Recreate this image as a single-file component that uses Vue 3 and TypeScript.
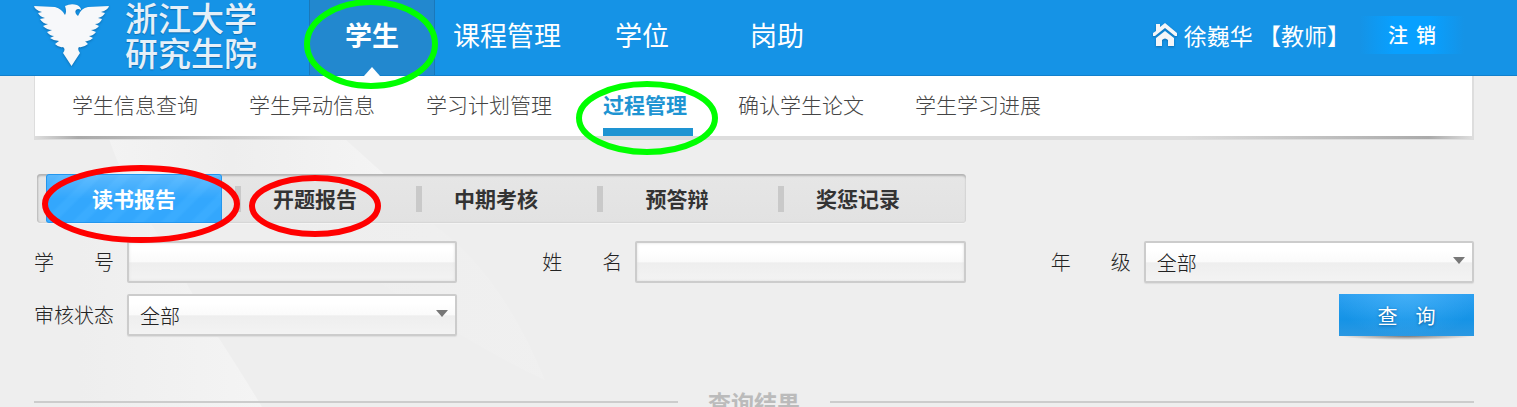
<template>
  <div class="page">
    <svg class="backdrop" viewBox="0 0 700 407" aria-hidden="true">
      <defs>
        <linearGradient id="ray" x1="0" x2="1">
          <stop offset="0" stop-color="#eeeeee" />
          <stop offset=".3" stop-color="#eeeeee" />
          <stop offset="1" stop-color="#f4f4f4" />
        </linearGradient>
        <linearGradient id="rayTop" x1="0" y1="0" x2="1" y2="0">
          <stop offset="0" stop-color="#f3f3f3" />
          <stop offset=".45" stop-color="#eeeeee" />
          <stop offset="1" stop-color="#f4f4f4" />
        </linearGradient>
        <linearGradient id="rayFar" x1="0" y1="0" x2="1" y2="0">
          <stop offset="0" stop-color="#eeeeee" />
          <stop offset="1" stop-color="#f1f1f1" />
        </linearGradient>
      </defs>
      <path d="M106 130 L335 130 L385 175 L385 222 L150 222 Q122 180 106 130 Z" fill="url(#rayTop)" />
      <path d="M0 222 L150 222 Q180 270 207 320 Q240 370 262 407 L60 407 Z" fill="url(#ray)" />
      <path d="M290 222 L430 222 Q500 270 545 380 Q500 360 420 310 Z" fill="url(#rayFar)" opacity=".6" />
    </svg>

    <header class="header">
      <a class="brand" href="#">
        <svg class="eagle" viewBox="0 0 76 64" aria-hidden="true">
          <path
            fill="#f7f8fa"
            d="M0 2 L21 3 Q28 5 31 11 Q33 8 31 2 Q37 -1 43 1 Q47 3 47 6 Q44 4 42 6 Q40 9 44 12 Q47 4 54 3 L75 2 Q74 6 67 8 L71 9 Q69 13 64 14 L68 15 Q66 20 61 20 L65 22 Q62 26 57 26 L62 28 Q59 32 55 32 L59 34 Q55 38 51 37 L54 40 Q49 44 45 43 Q43 45 46 49 Q42 55 37.500 62 Q33 55 29 49 Q32 45 29 43 Q25 44 21 40 L25 37 Q20 37 16 34 L20 32 Q16 32 13 28 L18 26 Q13 26 9 22 L14 20 Q9 20 6 15 L11 14 Q6 13 4 9 L8 8 Q1 6 0 2 Z"
          />
        </svg>
        <span class="brand-text"><span>浙江大学</span><span>研究生院</span></span>
      </a>
      <nav class="main-nav" aria-label="主导航">
        <a v-for="item in mainItems" :key="item" href="#" :class="{ active: item === '学生' }">
          {{ item }}
          <svg v-if="item === '学生'" class="mark mark-main" viewBox="0 0 134 90" aria-hidden="true">
            <ellipse cx="67" cy="44" rx="64" ry="42" />
          </svg>
        </a>
      </nav>
      <div class="user">
        <svg class="home" viewBox="0 0 26 26" aria-hidden="true">
          <path fill="#f4f6f8" d="M4 2 H8 V5 L13 1 L25 11 V14 L23 14 L13 6 L3 14 L1 14 V11 L4 9 Z M4 16 L13 9 L22 16 V24 H16 V18 Q13 15 10 18 V24 H4 Z" />
        </svg>
        <span>徐巍华 【教师】</span>
        <button class="logout" type="button"><span>注</span><span>销</span></button>
      </div>
    </header>

    <main class="content">
      <nav class="sub-nav" aria-label="学生">
        <a v-for="item in subItems" :key="item" href="#" :class="{ active: item === '过程管理' }">
          {{ item }}
          <svg v-if="item === '过程管理'" class="mark mark-sub" viewBox="0 0 144 76" aria-hidden="true">
            <ellipse cx="73" cy="38" rx="68" ry="34" />
          </svg>
        </a>
      </nav>

      <div class="tabs" role="tablist">
        <button
          v-for="(tab, i) in tabs"
          :key="tab"
          type="button"
          role="tab"
          :aria-selected="i === current"
          :class="{ active: i === current }"
          @click="current = i"
        >
          {{ tab }}
          <svg v-if="i === 0" class="mark mark-first" viewBox="0 0 202 80" aria-hidden="true">
            <ellipse cx="101" cy="40" rx="96" ry="36" />
          </svg>
          <svg v-if="i === 1" class="mark mark-second" viewBox="0 0 134 66" aria-hidden="true">
            <ellipse cx="67" cy="32" rx="63" ry="28" />
          </svg>
        </button>
      </div>

      <form class="filters" @submit.prevent>
        <div class="field">
          <label for="sid">学 号</label>
          <input id="sid" v-model="studentId" type="text" />
        </div>
        <div class="field">
          <label for="sname">姓 名</label>
          <input id="sname" v-model="studentName" type="text" />
        </div>
        <div class="field">
          <label for="grade">年 级</label>
          <span class="select-box">
            <select id="grade"><option>全部</option></select>
          </span>
        </div>
        <div class="field">
          <label for="state">审核状态</label>
          <span class="select-box">
            <select id="state"><option>全部</option></select>
          </span>
        </div>
        <button class="search" type="submit"><span>查</span><span>询</span></button>
      </form>

      <h2 class="result-title">查询结果</h2>
    </main>
  </div>
</template>

<script setup lang="ts">
import { ref } from 'vue'

const mainItems: string[] = ['学生', '课程管理', '学位', '岗助']
const subItems: string[] = ['学生信息查询', '学生异动信息', '学习计划管理', '过程管理', '确认学生论文', '学生学习进展']
const tabs: string[] = ['读书报告', '开题报告', '中期考核', '预答辩', '奖惩记录']

const current = ref(0)
const studentId = ref('')
const studentName = ref('')
</script>

<style>
body {
  margin: 0;
  background: #eee;
  overflow: hidden;
}
</style>

<style scoped>
.page {
  position: relative;
  font-family: 'Noto Sans CJK SC', sans-serif;
  font-size: 20px;
  font-weight: 300;
  color: #222;
}
.page *,
.page *::before,
.page *::after {
  box-sizing: border-box;
}
a {
  color: inherit;
  text-decoration: none;
}
button,
input,
select {
  font: inherit;
  color: inherit;
  border: 0;
  padding: 0;
  margin: 0;
  background: none;
}
.backdrop {
  position: absolute;
  top: 0;
  left: 0;
  width: 700px;
}
.header {
  position: relative;
  z-index: 1;
  display: flex;
  height: 76px;
  padding: 0 47px 0 34px;
  background: #1593e6;
  border-bottom: 1px solid #1280cc;
  color: #fff;
}
.brand {
  display: flex;
  gap: 15px;
  width: 275px;
}
.eagle {
  width: 76px;
  height: 64px;
  margin-top: 4px;
  filter: drop-shadow(0 1px 1px #0c6cb0);
}
.brand-text {
  display: flex;
  flex-direction: column;
  font-size: 33px;
  line-height: 35px;
  font-weight: 500;
  color: #e6f0f8;
  text-shadow: 0 1px 1px #0c6cb0;
}
.main-nav {
  display: flex;
  gap: 9px;
}
.main-nav a {
  position: relative;
  width: 126px;
  font-size: 27px;
  line-height: 70px;
  font-weight: 400;
  text-align: center;
  white-space: nowrap;
}
.main-nav .active {
  font-weight: 700;
  background: #2288cf;
  border: solid #1a78ba;
  border-width: 0 1px;
}
.main-nav .active::after {
  content: '';
  position: absolute;
  left: 54px;
  bottom: -1px;
  border: 8px solid transparent;
  border-bottom: 9px solid #fff;
  border-top: 0;
}
.mark {
  position: absolute;
  z-index: 2;
  fill: none;
  stroke: #0f0;
  stroke-width: 6;
  pointer-events: none;
}
.mark-main {
  width: 134px;
  left: -6px;
  top: 0;
}
.mark-sub {
  width: 144px;
  left: -29px;
  top: 4px;
}
.mark-first,
.mark-second {
  stroke: red;
}
.mark-first {
  width: 202px;
  left: -6px;
  top: -10px;
}
.mark-second {
  width: 134px;
  left: 21px;
  top: 0;
}
.user {
  display: flex;
  align-items: center;
  margin-left: auto;
  padding-bottom: 6px;
  font-size: 23px;
  font-weight: 400;
}
.home {
  width: 26px;
  height: 26px;
  margin-right: 6px;
  filter: drop-shadow(0 1px 1px #0c6cb0);
}
.logout {
  display: flex;
  align-items: center;
  justify-content: center;
  gap: 8px;
  width: 116px;
  height: 38px;
  margin-left: 4px;
  font-size: 20px;
  font-weight: 500;
  background: linear-gradient(90deg, #1593e6 5%, #08a0ff 35%, #08a0ff 65%, #1593e6 95%);
}
.content {
  position: relative;
  padding: 0 43px 0 34px;
}
.sub-nav {
  position: relative;
  display: flex;
  gap: 51px;
  height: 64px;
  padding-left: 37px;
  border: solid #ddd;
  border-width: 0 2px 4px 1px;
  background: #fff;
  font-size: 21px;
  line-height: 56px;
  color: #444;
}
.sub-nav::after {
  content: '';
  position: absolute;
  left: 0;
  right: 0;
  bottom: -3px;
  height: 3px;
  background: linear-gradient(90deg, transparent, #aaa 3%, transparent 20%, transparent 80%, #aaa 97%, transparent);
}
.sub-nav a {
  position: relative;
  height: 60px;
  white-space: nowrap;
}
.sub-nav .active {
  font-weight: 700;
  color: #1e94d2;
}
.sub-nav .active::after {
  content: '';
  position: absolute;
  left: 0;
  bottom: 0;
  width: 90px;
  height: 8px;
  background: #1e94d2;
}
.tabs {
  display: flex;
  gap: 5px;
  width: 929px;
  height: 49px;
  margin: 34px 0 18px 3px;
  padding-left: 9px;
  border-radius: 4px;
  background: linear-gradient(#e6e6e6, #e2e2e2);
  box-shadow: inset 0 2px 2px #b4b4b4, inset 1px 0 2px #bbb, 0 1px 0 #f4f4f4;
}
.tabs button {
  position: relative;
  width: 176px;
  font-size: 21px;
  font-weight: 700;
  line-height: 49px;
  color: #333;
}
.tabs button + button::before {
  content: '';
  position: absolute;
  left: 8px;
  top: 12px;
  width: 6px;
  height: 26px;
  background: #c9c9c9;
}
.tabs button.active {
  color: #fff;
  border-radius: 3px;
  background:
    linear-gradient(rgba(255, 255, 255, 0.2), transparent 50%),
    repeating-linear-gradient(135deg, #33a7fd 0 9px, #3aacff 12px 18px, #33a7fd 21px);
  box-shadow: inset 0 0 0 1px #2396ee;
}
.filters {
  display: grid;
  grid-template-columns: repeat(3, 1fr);
  gap: 11px 85px;
}
.field {
  display: flex;
  gap: 13px;
}
.field label {
  width: 80px;
  line-height: 42px;
  text-align: justify;
  text-align-last: justify;
  white-space: nowrap;
}
.field input,
.select-box {
  flex: 1;
  min-width: 0;
  height: 42px;
  border: 2px solid #ccc;
  border-radius: 2px;
  background: linear-gradient(#fff 20%, #fafafa 50%, #eee 52%, #f3f3f3);
  box-shadow: inset 0 0 3px #ddd;
}
.field input {
  padding: 0 12px;
}
.select-box {
  position: relative;
  box-shadow: 0 1px 1px #ddd;
}
.select-box select {
  appearance: none;
  width: 100%;
  height: 38px;
  padding: 0 11px;
}
.select-box::after {
  content: '';
  position: absolute;
  right: 7px;
  top: 14px;
  border: 6px solid transparent;
  border-top: 7px solid #777;
  border-bottom: 0;
  pointer-events: none;
}
.search {
  position: relative;
  grid-column: 3;
  justify-self: end;
  display: flex;
  align-items: center;
  justify-content: center;
  gap: 18px;
  width: 135px;
  height: 42px;
  color: #fff;
  font-weight: 400;
  text-shadow: 0 1px 3px #0a5c9c;
  background:
    radial-gradient(ellipse at 50% 0, rgba(90, 190, 255, 0.5), transparent 75%),
    linear-gradient(#2b9ff0, #1593e6 60%, #2a98e2);
}
.search::after {
  content: '';
  position: absolute;
  left: 0;
  right: 0;
  top: 100%;
  height: 4px;
  background: radial-gradient(ellipse at 50% 0, #777, transparent 70%);
}
.result-title {
  display: flex;
  align-items: center;
  gap: 30px;
  margin: 54px 0 0;
  font-size: 23px;
  line-height: 24px;
  color: #bbb;
}
.result-title::before,
.result-title::after {
  content: '';
  flex: 1;
  height: 2px;
  background: #ccc;
}
</style>
